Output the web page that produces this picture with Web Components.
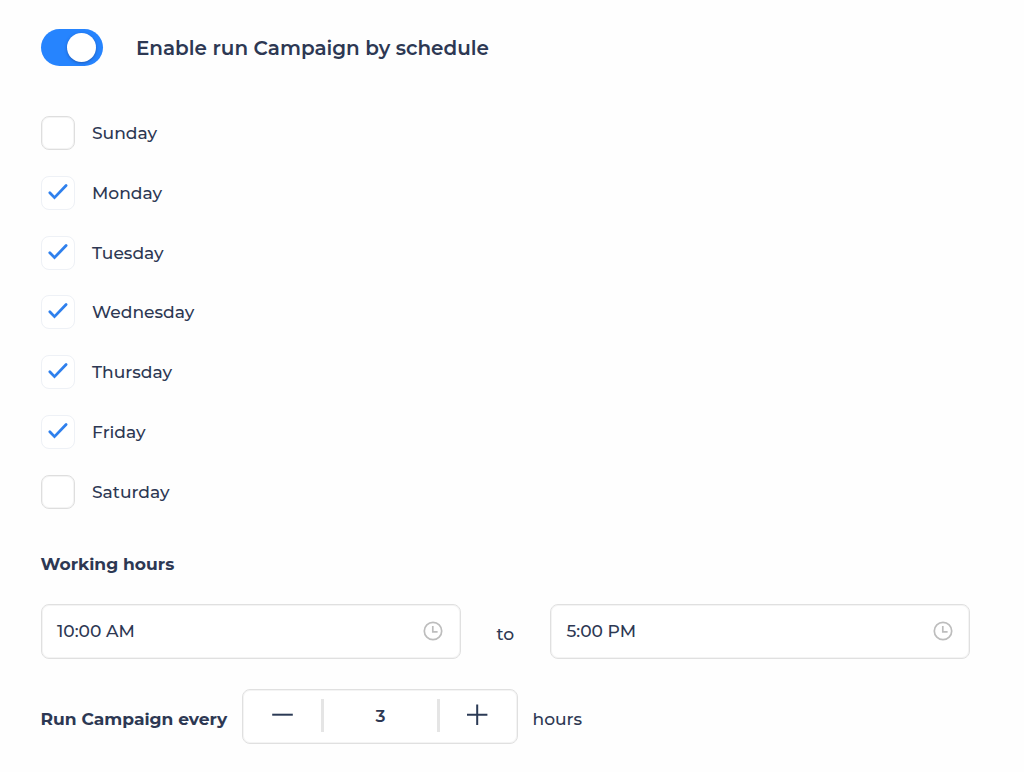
<!DOCTYPE html>
<html lang="en">
<head>
<meta charset="utf-8">
<title>Campaign schedule</title>
<style>
  body { margin: 0; background: #fefefe; }
</style>
</head>
<body>
<campaign-schedule></campaign-schedule>

<script>
const define = (tag, html) => {
  const template = document.createElement('template')
  template.innerHTML = html
  customElements.define(tag, class extends HTMLElement {
    constructor() {
      super()
      this.attachShadow({ mode: 'open' })
      this.shadowRoot.appendChild(template.content.cloneNode(true))
    }
  })
}

define('toggle-switch', `
  <style>
    :host {
      display: flex;
      align-items: center;
      justify-content: flex-end;
      box-sizing: border-box;
      width: 62.5px;
      height: 37px;
      padding-right: 7px;
      border-radius: 19px;
      background: #2684fe;
    }
    i {
      width: 29px;
      height: 29px;
      border-radius: 50%;
      background: #fff;
      box-shadow: 0 1px 3px rgba(20, 50, 120, .5);
    }
  </style>
  <i></i>
`)

define('day-option', `
  <style>
    :host { display: flex; align-items: center; gap: 17.5px; height: 34px; }
    .box {
      display: flex;
      box-sizing: border-box;
      width: 34px;
      height: 34px;
      border: 1px solid #dedede;
      box-shadow: inset 0 0 0 1px #f4f4f4;
      border-radius: 8px;
      background: #fff;
    }
    svg { display: none; width: 100%; height: 100%; overflow: visible; }
    :host([checked]) .box { border-color: #eef1f6; box-shadow: none; }
    :host([checked]) svg { display: block; }
  </style>
  <span class="box">
    <svg viewBox="0 0 32 32"><path d="M7.8 15.7l4.7 4.9L24.1 8.5" fill="none" stroke="#2f80ed" stroke-width="2.8" stroke-linecap="round" stroke-linejoin="miter"/></svg>
  </span>
  <slot></slot>
`)

define('time-field', `
  <style>
    :host {
      display: flex;
      align-items: center;
      justify-content: space-between;
      box-sizing: border-box;
      width: 420px;
      height: 55px;
      padding: 0 16.5px 1px 15.5px;
      border: 1px solid #e0e0e0;
      box-shadow: inset 0 0 0 1px #f4f4f4;
      border-radius: 8px;
      background: #fff;
    }
    svg { width: 20px; height: 20px; }
  </style>
  <slot></slot>
  <svg viewBox="0 0 20 20" fill="none" stroke="#bdbdbd">
    <circle cx="10" cy="10" r="8.7" stroke-width="1.7"/>
    <path d="M9.8 5v5.8h4.8" stroke-width="1.7"/>
  </svg>
`)

define('number-stepper', `
  <style>
    :host {
      display: grid;
      grid-template-columns: 78px 1fr 78px;
      align-items: center;
      box-sizing: border-box;
      width: 276px;
      height: 55px;
      padding-bottom: 2px;
      border: 1px solid #e0e0e0;
      box-shadow: inset 0 0 0 1px #f4f4f4;
      border-radius: 8px;
      background: #fff;
    }
    svg { width: 22px; height: 22px; justify-self: center; }
    .value {
      display: flex;
      align-items: center;
      justify-content: center;
      box-sizing: border-box;
      height: 33px;
      margin-right: -1px;
      border: solid #e5e5e5;
      border-width: 0 3px;
      font-weight: 600;
      padding-top: 2px;
    }
  </style>
  <svg viewBox="0 0 22 22" stroke="#2b3a55" stroke-width="2"><path d="M1.2 10.7h20.6"/></svg>
  <div class="value"><slot></slot></div>
  <svg viewBox="0 0 22 22" stroke="#2b3a55" stroke-width="2"><path d="M0 10.7h20.4M10.2 .5v20.4"/></svg>
`)

define('campaign-schedule', `
  <style>
    :host {
      display: block;
      box-sizing: border-box;
      height: 772px;
      overflow: hidden;
      padding: 29px 54px 0 40.5px;
      color: #2d3853;
      font: 500 17.1px/24px Montserrat, Inter, sans-serif;
      white-space: nowrap;
    }
    header { display: flex; align-items: center; gap: 33px; }
    .title { font-size: 19.95px; font-weight: 600; }
    .days { display: grid; gap: 25.83px; margin-top: 50px; }
    .heading { margin-top: 43.5px; font-weight: 700; }
    .hours { display: flex; align-items: center; justify-content: space-between; margin-top: 27.5px; }
    .hours > span { padding-top: 5px; }
    .every { display: flex; align-items: center; margin-top: 30px; }
    .every > span { padding-top: 6px; }
    .every number-stepper { margin: 0 14.5px 0 13px; }
    .strong { width: 188.5px; font-weight: 700; }
  </style>
  <header>
    <toggle-switch></toggle-switch>
    <span class="title">Enable run Campaign by schedule</span>
  </header>
  <div class="days">
    <day-option>Sunday</day-option>
    <day-option checked>Monday</day-option>
    <day-option checked>Tuesday</day-option>
    <day-option checked>Wednesday</day-option>
    <day-option checked>Thursday</day-option>
    <day-option checked>Friday</day-option>
    <day-option>Saturday</day-option>
  </div>
  <div class="heading">Working hours</div>
  <div class="hours">
    <time-field>10:00 AM</time-field>
    <span>to</span>
    <time-field>5:00 PM</time-field>
  </div>
  <div class="every">
    <span class="strong">Run Campaign every</span>
    <number-stepper>3</number-stepper>
    <span>hours</span>
  </div>
`)
</script>
</body>
</html>
